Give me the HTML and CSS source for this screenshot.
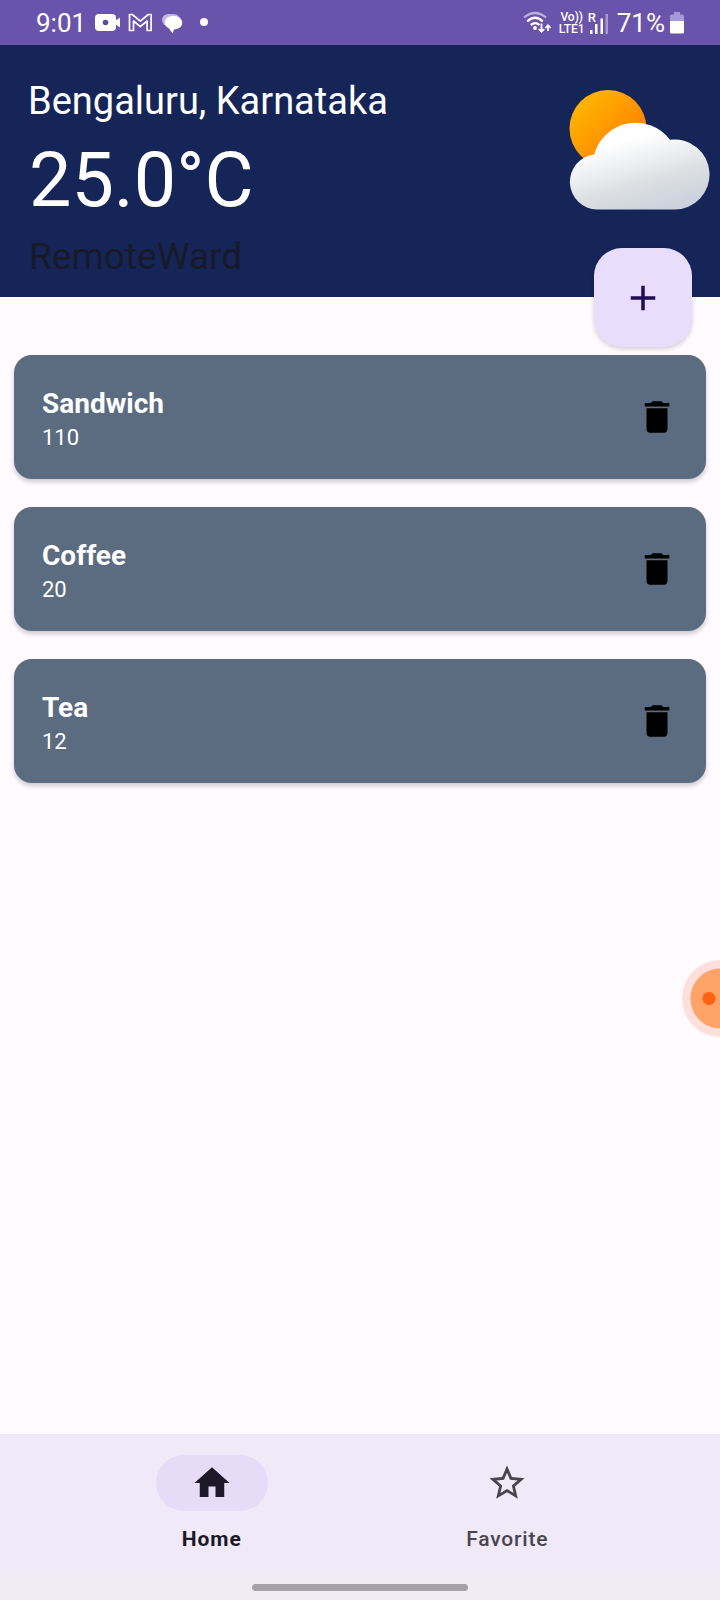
FILE: index.html
```html
<!DOCTYPE html>
<html lang="en">
<head>
<meta charset="utf-8">
<title>Weather</title>
<link rel="stylesheet" href="styles.css">
</head>
<body>
<div class="screen">
  <div class="status">
    <div class="status-left">
      <span class="clock">9:01</span>
      <svg class="notifications" width="124" height="45" viewBox="88 0 124 45">
        <rect x="95" y="14" width="21" height="17" rx="4" fill="#fff"/>
        <path d="M115 21l5-3.500v10l-5-3.500z" fill="#fff"/>
        <circle cx="105.500" cy="22.500" r="2.800" fill="#5d4c9e"/>
        <path d="M129.500 30.500v-16h2.800l8 6.700 8-6.700h2.800v16h-4v-9.500l-6.800 5.700-6.800-5.700v9.500z" fill="none" stroke="#fff" stroke-width="1.700" stroke-linejoin="round"/>
        <rect x="162" y="14" width="18" height="12" rx="6" fill="#c2b7e0"/>
        <path d="M173.500 16c5 0 8.700 2.700 8.700 6.700s-3.400 6.500-8 6.600l-1.700 3.900-3.700-4.900c-2.500-1.200-4-3.200-4-5.600 0-4 3.700-6.700 8.700-6.700z" fill="#fff"/>
        <circle cx="204" cy="22" r="4" fill="#fff"/>
      </svg>
    </div>
    <div class="status-right">
      <svg class="wifi" width="30" height="26" viewBox="522 10 30 26" fill="none" stroke="#fff">
        <path d="M524 17.500q11-9 22 0" stroke="#bcb0dc" stroke-width="2.200"/>
        <path d="M527.200 21.500q8-7.500 15.500 0M530.800 25q4.500-3.800 8.700 0" stroke-width="2.300"/>
        <circle cx="535" cy="28" r="1.900" fill="#fff" stroke="none"/>
        <path d="M541.500 23.500v8.300M538.800 29l2.700 2.800 2.700-2.800M548 31v-5.800M545.300 28l2.700-2.800 2.700 2.800" stroke-width="1.800"/>
      </svg>
      <div class="volte"><span>Vo))</span><span>LTE1</span></div>
      <div class="signal">
        <span class="roaming">R</span>
        <svg width="20" height="24" viewBox="588 10 20 24">
          <path d="M590 29h2.500v4H590zM595 23h2.500v10H595zM600.500 17.500h2.500V33h-2.500z" fill="#fff"/>
          <path d="M605.500 13h2.500v20h-2.500z" fill="#a799d0"/>
        </svg>
      </div>
      <span class="percent">71%</span>
      <svg width="14" height="24" viewBox="670 11 14 24">
        <path d="M674 12h6v2.500h2.500q1.500 0 1.500 1.500v5h-14v-5q0-1.500 1.500-1.500h2.500z" fill="#a799d6"/>
        <path d="M670 21h14v11q0 1.500-1.500 1.500h-11q-1.500 0-1.500-1.500z" fill="#fff"/>
      </svg>
    </div>
  </div>

  <header class="weather">
    <div class="readings">
      <div class="place">Bengaluru, Karnataka</div>
      <div class="temp">25.0°C</div>
      <div class="brand">RemoteWard</div>
    </div>
    <svg class="sky" width="142" height="121" viewBox="569 90 142 121">
      <defs>
        <linearGradient id="sun" x1="0" y1="0" x2="1" y2="1"><stop offset="0.100" stop-color="#ffb800"/><stop offset="0.650" stop-color="#ff8c00"/></linearGradient>
        <linearGradient id="cloud" gradientUnits="userSpaceOnUse" x1="625" y1="122" x2="650" y2="210"><stop offset="0.200" stop-color="#fff"/><stop offset="0.700" stop-color="#dcdfe2"/><stop offset="1" stop-color="#cdd3de"/></linearGradient>
      </defs>
      <circle cx="608" cy="128.500" r="38.500" fill="url(#sun)"/>
      <path d="M597 209.500A27.600 27.600 0 0 1 594.200 154.500A43 43 0 0 1 670 139.800A35 35 0 1 1 674.500 209.500z" fill="url(#cloud)"/>
    </svg>
    <button class="fab" aria-label="Add">
      <svg width="42" height="42" viewBox="0 0 24 24"><path d="M19 13h-6v6h-2v-6H5v-2h6V5h2v6h6z" fill="#210b55"/></svg>
    </button>
  </header>

  <main class="items">
    <article class="card">
      <div class="label"><div class="name">Sandwich</div><div class="price">110</div></div>
      <svg width="42" height="42" viewBox="0 0 24 24"><path d="M6 19c0 1.100.9 2 2 2h8c1.100 0 2-.9 2-2V7H6v12zM19 4h-3.500l-1-1h-5l-1 1H5v2h14V4z"/></svg>
    </article>
    <article class="card">
      <div class="label"><div class="name">Coffee</div><div class="price">20</div></div>
      <svg width="42" height="42" viewBox="0 0 24 24"><path d="M6 19c0 1.100.9 2 2 2h8c1.100 0 2-.9 2-2V7H6v12zM19 4h-3.500l-1-1h-5l-1 1H5v2h14V4z"/></svg>
    </article>
    <article class="card">
      <div class="label"><div class="name">Tea</div><div class="price">12</div></div>
      <svg width="42" height="42" viewBox="0 0 24 24"><path d="M6 19c0 1.100.9 2 2 2h8c1.100 0 2-.9 2-2V7H6v12zM19 4h-3.500l-1-1h-5l-1 1H5v2h14V4z"/></svg>
    </article>
  </main>

  <nav class="tabs">
    <div class="tab active">
      <div class="pill"><svg width="42" height="42" viewBox="0 0 24 24"><path d="M10 20v-6h4v6h5v-8h3L12 3 2 12h3v8z" fill="#1d1828"/></svg></div>
      <span>Home</span>
    </div>
    <div class="tab">
      <div class="pill"><svg width="42" height="42" viewBox="0 0 24 24"><path d="M22 9.240l-7.190-.62L12 2 9.190 8.630 2 9.240l5.460 4.730L5.820 21 12 17.270 18.180 21l-1.630-7.030L22 9.240zM12 15.400l-3.760 2.270 1-4.280-3.320-2.880 4.380-.38L12 6.100l1.710 4.040 4.380.38-3.320 2.880 1 4.280L12 15.400z" fill="#49454f"/></svg></div>
      <span>Favorite</span>
    </div>
  </nav>
  <div class="gesture"><div class="handle"></div></div>
  <div class="bubble"></div>
</div>
</body>
</html>
```
FILE: styles.css
```css
* { box-sizing: border-box; }
body { margin: 0; font-family: Roboto, "Liberation Sans", sans-serif; }
.screen {
  position: relative;
  width: 720px;
  height: 1600px;
  display: flex;
  flex-direction: column;
  overflow: hidden;
  background: #fffbff;
}
.status {
  height: 45px;
  display: flex;
  justify-content: space-between;
  align-items: center;
  padding: 0 36px;
  background: #6953ab;
  color: #fff;
}
.status-left, .status-right { display: flex; align-items: center; }
.status-left { gap: 3px; }
.clock { width: 49px; padding-top: 2px; font-size: 26px; line-height: 43px; white-space: nowrap; }
.wifi { margin-right: 7px; }
.volte {
  width: 26px;
  display: flex;
  flex-direction: column;
  align-items: center;
  font-size: 12px;
  font-weight: 500;
  line-height: 12px;
  white-space: nowrap;
}
.signal { position: relative; height: 24px; margin-left: 3px; }
.roaming { position: absolute; left: 0; top: 0; font-size: 13px; font-weight: 500; line-height: 13px; }
.percent { margin: 0 5px 0 9px; padding-top: 2px; font-size: 26px; line-height: 43px; }
.weather {
  position: relative;
  height: 252px;
  display: flex;
  justify-content: space-between;
  padding: 0 9px 0 28px;
  background: #152558;
  color: #fff;
}
.readings { padding-top: 33px; white-space: nowrap; }
.place { font-size: 38px; line-height: 46px; }
.temp { padding-left: 1px; font-size: 75.500px; line-height: 112px; }
.brand { padding-left: 1px; font-size: 37px; line-height: 42px; color: #181a28; }
.sky { margin-top: 45px; }
.fab {
  position: absolute;
  right: 28px;
  bottom: -50px;
  width: 98px;
  height: 99px;
  display: grid;
  place-items: center;
  padding: 0;
  border: 0;
  border-radius: 28px;
  background: #e9ddfc;
  box-shadow: 0 2px 5px rgba(0, 0, 0, .18);
}
.items {
  flex: 1;
  display: flex;
  flex-direction: column;
  gap: 28px;
  padding: 58px 14px 0;
}
.card {
  height: 124px;
  display: flex;
  align-items: center;
  justify-content: space-between;
  padding: 0 28px;
  border-radius: 18px;
  background: #5b6b80;
  box-shadow: 0 3px 5px rgba(0, 0, 0, .2);
  color: #fff;
}
.label { padding-top: 5px; }
.name { font-size: 28px; font-weight: 700; line-height: 36px; }
.price { font-size: 22px; line-height: 31px; }
.tabs {
  height: 140px;
  display: flex;
  padding: 21px 65px 0 64px;
  background: #f0e9f7;
}
.tab {
  flex: 1;
  display: flex;
  flex-direction: column;
  align-items: center;
  gap: 14px;
  color: #49454f;
  font-size: 21px;
  font-weight: 500;
  line-height: 28px;
  letter-spacing: .8px;
}
.active { color: #1d1828; font-weight: 700; letter-spacing: .9px; }
.pill { width: 112px; height: 56px; display: grid; place-items: center; border-radius: 28px; }
.active .pill { background: #e7dcf8; }
.gesture { height: 26px; display: flex; justify-content: center; padding-top: 10px; background: #f0ecf3; }
.handle { width: 216px; height: 7px; border-radius: 4px; background: #a6a1a9; }
.bubble {
  position: absolute;
  left: 682px;
  top: 960px;
  width: 77px;
  height: 77px;
  border-radius: 50%;
  background: radial-gradient(circle 7px at 27px 38.500px, #ff6210 6px, transparent 7px), radial-gradient(circle, #ffa468 29.500px, #ffdfdc 30.500px);
}
```
